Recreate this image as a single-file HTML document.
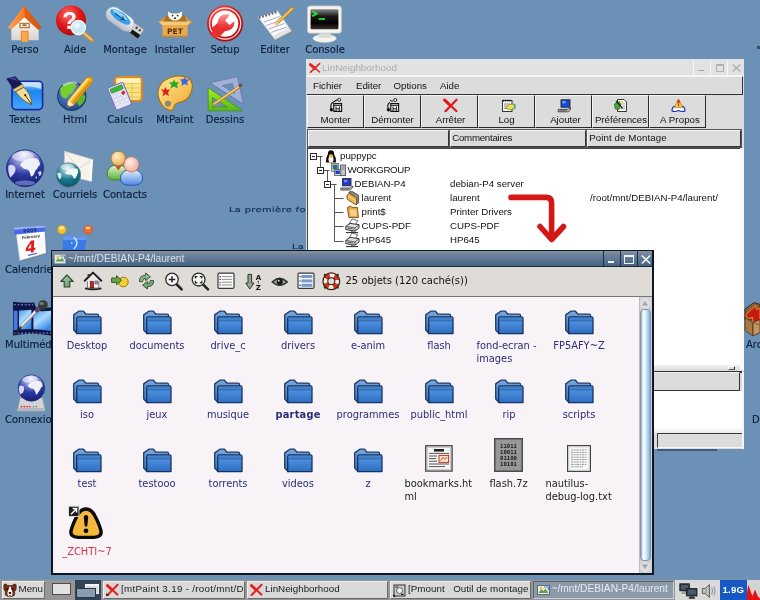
<!DOCTYPE html>
<html><head><meta charset="utf-8"><title>Bureau</title>
<style>
*{box-sizing:border-box;margin:0;padding:0}
html,body{width:760px;height:600px;overflow:hidden}
body{background:#6b91b6;position:relative;font-family:"DejaVu Sans","Liberation Sans",sans-serif;font-size:10px;color:#0e2242}
.abs{position:absolute}
svg{position:absolute;overflow:visible}
.dl{position:absolute;white-space:nowrap;font-size:10px;line-height:12px;color:#0b1e3c;-webkit-text-stroke:.15px #0b1e3c;text-align:center;transform:translateX(-50%);margin-top:.5px;filter:blur(.35px)}
.di{position:absolute;width:40px;height:40px;filter:blur(.35px)}
/* LinNeighborhood */
#lin{position:absolute;left:306px;top:59px;width:438px;height:390px;background:#dcdcdc;font-family:"Liberation Sans",sans-serif;font-size:9.7px;color:#111;overflow:hidden;filter:blur(.3px)}
#lin .tb{position:absolute;left:0;top:0;width:438px;height:17px;background:#e2e2e2;border-bottom:1px solid #f4f4f4}
#lin .tt{position:absolute;left:16px;top:3px;color:#adadad;font-size:9.85px;line-height:12px}
#lin .mb{position:absolute;left:1px;top:17px;width:436px;height:19px;border-right:1.5px solid #333;border-bottom:1.5px solid #333;border-top:1px solid #f6f6f6;background:#dcdcdc}
#lin .mb span{position:absolute;top:3px;line-height:12px}
#lin .tbtn{position:absolute;top:36px;height:33px;border-right:1.5px solid #2a2a2a;border-bottom:1.5px solid #2a2a2a;border-left:1px solid #f4f4f4;border-top:1px solid #f4f4f4;background:#dcdcdc;text-align:center}
#lin .tbtn span{position:absolute;left:0;right:0;top:18px;line-height:12px;white-space:nowrap}
#lin .ch{position:absolute;top:71px;height:16.5px;border-right:1.5px solid #333;border-bottom:1.5px solid #333;border-top:1px solid #f8f8f8;border-left:1px solid #f8f8f8;background:#dcdcdc;padding-left:1.2px;line-height:14.5px;outline:1px solid #555;white-space:nowrap}
#lin .tree{position:absolute;left:1px;top:89px;width:434px;height:217px;background:#fff;border-top:1.5px solid #444;border-left:1.5px solid #444}
#lin .tr{position:absolute;white-space:nowrap;line-height:12px}
/* ROX */
#rox{position:absolute;left:51px;top:250px;width:603px;height:325px;background:#10161e;filter:blur(.3px)}
#rox .tb{position:absolute;left:1px;top:1px;width:600px;height:16px;background:linear-gradient(#8290a4,#6c8099 30%,#4c6a88 85%,#46627f);border-bottom:1px solid #1c2a3c}
#rox .tt{position:absolute;left:16px;top:2px;font-family:"Liberation Sans",sans-serif;font-size:10.2px;line-height:12px;color:#d8e2ee;white-space:nowrap}
#rox .tool{position:absolute;left:1.5px;top:17px;width:599.7px;height:30px;background:#dfdbd6;border-bottom:1px solid #777}
#rox .cont{position:absolute;left:1.5px;top:47px;width:599.7px;height:276px;background:#f7f3f7;overflow:hidden}
.fl{position:absolute;white-space:nowrap;font-size:9.85px;line-height:11px;color:#2c2c78;text-align:center;transform:translateX(-50%)}
.fl.k{color:#222;text-align:left;transform:none}
.fl.l{text-align:left;transform:none}
.fo{position:absolute;width:30px;height:26px}
/* taskbar */
#task{position:absolute;left:0;top:578.5px;width:760px;height:22px;background:#969696;border-top:1.5px solid #7a93ad;font-family:"Liberation Sans",sans-serif;font-size:9.8px;color:#000;filter:blur(.3px);will-change:transform}
#task .b{position:absolute;top:1px;height:17.5px;color:#1a1a1a;border:1px solid #6a6a6a;border-top-color:#f0f0f0;border-left-color:#f0f0f0;background:#d9d9d9;white-space:nowrap;overflow:hidden;line-height:13.5px}
</style></head><body>
<svg width="0" height="0" style="position:absolute">
<defs>
<linearGradient id="ff" x1="0" y1="0" x2="0" y2="1"><stop offset="0" stop-color="#5a9be6"/><stop offset="1" stop-color="#2c6ec2"/></linearGradient>
<linearGradient id="fb" x1="0" y1="0" x2="0" y2="1"><stop offset="0" stop-color="#7aa8de"/><stop offset="1" stop-color="#3f72b4"/></linearGradient>
<symbol id="fo" viewBox="0 0 30 25">
<path d="M0.7,4.4 L5.8,0.7 L10.4,0.7 L13,3.7 L24,3.7 Q25.6,3.7 25.6,5.5 L25.6,8 L5,8 L4,23 L0.7,19.5 Z" fill="url(#fb)" stroke="#1d3a68" stroke-width="1.3" stroke-linejoin="round"/>
<path d="M3.7,7.8 Q3.7,6.4 5.1,6.4 L26.6,6.4 Q28,6.4 28,7.8 L28,23.1 L3.7,23.1 Z" fill="url(#ff)" stroke="#17335f" stroke-width="1.3" stroke-linejoin="round"/>
<path d="M4.4,10.3 L27.3,10.3" stroke="#2a5a9c" stroke-width="0.9"/>
<path d="M4.5,7.2 L27.2,7.2 L27.2,9.7 L4.5,9.7 Z" fill="#3d78c2" opacity=".7"/>
</symbol>
</defs>
</svg>

<svg width="0" height="0" style="position:absolute"><defs>
<linearGradient id="gRoof" x1="0" y1="0" x2="1" y2="0"><stop offset="0" stop-color="#ffa25a"/><stop offset=".5" stop-color="#f87a20"/><stop offset="1" stop-color="#d85a10"/></linearGradient>
<linearGradient id="gWr" x1="0" y1="0" x2="0" y2="1"><stop offset="0" stop-color="#ff9a9a"/><stop offset=".6" stop-color="#f04444"/><stop offset="1" stop-color="#e42424"/></linearGradient>
<linearGradient id="gWall" x1="0" y1="0" x2="0" y2="1"><stop offset="0" stop-color="#ffffff"/><stop offset="1" stop-color="#d8d4d0"/></linearGradient>
<radialGradient id="gRed" cx=".4" cy=".3" r=".8"><stop offset="0" stop-color="#ff6a6a"/><stop offset=".5" stop-color="#e01818"/><stop offset="1" stop-color="#a00808"/></radialGradient>
<radialGradient id="gGlobe" cx=".48" cy=".12" r=".95"><stop offset="0" stop-color="#eeeefc"/><stop offset=".3" stop-color="#8a92d8"/><stop offset=".58" stop-color="#2a38a0"/><stop offset="1" stop-color="#121a6c"/></radialGradient>
<radialGradient id="gTeal" cx=".45" cy=".25" r=".85"><stop offset="0" stop-color="#d8f0f0"/><stop offset=".5" stop-color="#1a7a90"/><stop offset="1" stop-color="#0a4858"/></radialGradient>
<radialGradient id="gEarth" cx=".45" cy=".3" r=".8"><stop offset="0" stop-color="#6a98d8"/><stop offset="1" stop-color="#1a3a80"/></radialGradient>
<linearGradient id="gBlueSq" x1="0" y1="0" x2="0" y2="1"><stop offset="0" stop-color="#b8dcff"/><stop offset=".35" stop-color="#1a86f0"/><stop offset="1" stop-color="#48a8ff"/></linearGradient>
<linearGradient id="gPal" x1="0" y1="0" x2="1" y2="1"><stop offset="0" stop-color="#ffe890"/><stop offset="1" stop-color="#f0a830"/></linearGradient>
<linearGradient id="gGreenT" x1="0" y1="0" x2="0" y2="1"><stop offset="0" stop-color="#a8f020"/><stop offset="1" stop-color="#58b818"/></linearGradient>
<linearGradient id="gScr" x1="0" y1="0" x2="0" y2="1"><stop offset="0" stop-color="#8a8a8a"/><stop offset=".35" stop-color="#1a1a1a"/><stop offset=".7" stop-color="#000"/><stop offset="1" stop-color="#3a3030"/></linearGradient>
<linearGradient id="gUsb" x1="0" y1="0" x2="0" y2="1"><stop offset="0" stop-color="#ffffff"/><stop offset="1" stop-color="#b8bcc8"/></linearGradient>
<linearGradient id="gGreenB" x1="0" y1="0" x2="0" y2="1"><stop offset="0" stop-color="#e8f8d8"/><stop offset="1" stop-color="#58b038"/></linearGradient>
<linearGradient id="gBlueB" x1="0" y1="0" x2="0" y2="1"><stop offset="0" stop-color="#e8f0ff"/><stop offset="1" stop-color="#4a88e0"/></linearGradient>
<radialGradient id="gHead1" cx=".4" cy=".35" r=".7"><stop offset="0" stop-color="#fff0c8"/><stop offset="1" stop-color="#f0a850"/></radialGradient>
<radialGradient id="gHead2" cx=".4" cy=".35" r=".7"><stop offset="0" stop-color="#fff0e8"/><stop offset="1" stop-color="#f0a898"/></radialGradient>
<linearGradient id="gFilm" x1="0" y1="0" x2=".6" y2="1"><stop offset="0" stop-color="#4a90e8"/><stop offset=".5" stop-color="#a8dcff"/><stop offset="1" stop-color="#3a88e4"/></linearGradient>
</defs></svg>

<!-- Perso -->
<svg class="di" style="left:5px;top:3px" viewBox="0 0 40 40">
<path d="M19.5,13.5 L6.3,26 L6.3,37.3 L33.7,37.3 L33.7,26 Z" fill="url(#gWall)"/>
<path d="M19.3,2.6 L2.9,24.6 L6,26.8 L19.5,14.3 L33.2,26.8 L36.6,24.6 Z" fill="url(#gRoof)"/>
<path d="M19.3,2.6 L36.6,24.6 L33.2,26.8 L19.5,14.3 Z" fill="#d0500c" opacity=".55"/>
<rect x="14.3" y="19.8" width="10.6" height="5.4" fill="#b87838"/><rect x="15.6" y="21" width="8" height="3" fill="#f4ead8"/><rect x="17.5" y="21.4" width="4" height="1.5" fill="#8a5a30"/>
<rect x="15.8" y="27.8" width="7.8" height="11" fill="#f08a28"/><rect x="17" y="29" width="5.4" height="9.8" fill="#f8a850"/>
</svg>
<!-- Aide -->
<svg class="di" style="left:55px;top:3px" viewBox="0 0 40 40">
<circle cx="16" cy="17.4" r="15" fill="url(#gRed)"/>
<text x="14.5" y="26" font-family="Liberation Sans,sans-serif" font-weight="bold" font-size="24" fill="#fff" text-anchor="middle">?</text>
<path d="M28.5,30 L37,37.5" stroke="#c89030" stroke-width="4" stroke-linecap="round"/><path d="M29,29.8 L36.8,36.8" stroke="#f4d070" stroke-width="1.6" stroke-linecap="round"/>
<circle cx="23.3" cy="24.6" r="7" fill="#c8e8f4" stroke="#eef4f8" stroke-width="1.6"/><circle cx="21.8" cy="22.6" r="3" fill="#eefaff" opacity=".8"/>
</svg>
<!-- Montage -->
<svg class="di" style="left:105px;top:3px" viewBox="0 0 40 40">
<g transform="translate(5.6,9.4) rotate(35.5)">
<rect x="25" y="-5.4" width="12.4" height="10.8" fill="#d8d8dc" stroke="#8a8a90" stroke-width=".8"/>
<rect x="27.6" y="1.2" width="9.8" height="4.2" fill="#161616"/>
<rect x="29" y="-3.6" width="2.2" height="2.2" fill="#444"/><rect x="33" y="-3.6" width="2.2" height="2.2" fill="#444"/>
<rect x="-4" y="-7.6" width="31" height="15.2" rx="7.6" fill="url(#gUsb)" stroke="#a8acb8" stroke-width=".6"/>
<ellipse cx="10.5" cy="-2" rx="12" ry="4.6" fill="#38a0e8"/><ellipse cx="9" cy="-3.6" rx="9" ry="2" fill="#b8e4ff" opacity=".7"/>
<path d="M4,-1.8 L17,-1.8 M12,-3.8 L15,-1.8 L12,.2" stroke="#0a4a88" stroke-width="1" fill="none"/>
</g></svg>
<!-- Installer -->
<svg class="di" style="left:155px;top:3px" viewBox="0 0 40 40">
<path d="M7.5,21.5 L3,19.5 L11,12.5 L15.5,15.5 Z" fill="#d89840"/><path d="M32.5,21.5 L37.5,19.5 L29.5,12.5 L24.5,15.5 Z" fill="#d89840"/>
<path d="M11,12.5 L29.5,12.5 L32.5,21 L7.5,21 Z" fill="#a87028"/>
<path d="M13,8.4 L16.6,10.4 L23.4,10.4 L27.2,8.4 L26.8,13.4 Q24.6,17.4 20,17.4 Q15.4,17.4 13.4,13.4 Z" fill="#fffdf6"/>
<circle cx="17.6" cy="12.6" r=".9" fill="#222"/><circle cx="22.6" cy="12.6" r=".9" fill="#222"/><ellipse cx="20" cy="15.2" rx="1.2" ry=".9" fill="#333"/>
<path d="M4.2,18.6 L35.8,18.6 L33,22.3 L7,22.3 Z" fill="#f6c878"/>
<rect x="7.4" y="22" width="25.2" height="12" fill="#eca84c"/><rect x="7.4" y="32.5" width="25.2" height="1.6" fill="#c88830"/>
<text x="20" y="31.2" font-family="DejaVu Sans,sans-serif" font-weight="bold" font-size="7.6" fill="#4a3010" text-anchor="middle">PET</text>
</svg>
<!-- Setup -->
<svg class="di" style="left:205px;top:3px" viewBox="0 0 40 40">
<circle cx="20.1" cy="20.6" r="18" fill="url(#gRed)"/>
<circle cx="20.1" cy="20.6" r="15.6" fill="none" stroke="#ffdcdc" stroke-width="1.3"/>
<circle cx="20.1" cy="20.6" r="13.2" fill="#fff"/>
<path d="M7.4,24.4 Q9.4,31.6 15.4,33 L21,27 L13.4,19.6 Z" fill="#e83030"/>
<path d="M10.4,31 L19,21.4" stroke="#e83030" stroke-width="7.4" stroke-linecap="round"/>
<circle cx="21" cy="19.6" r="8.4" fill="url(#gWr)"/>
<path d="M20.2,17.6 L24.6,22.2 L32,15.4 L26.6,9.6 Z" fill="#fff"/>
</svg>
<!-- Editer -->
<svg class="di" style="left:255px;top:3px" viewBox="0 0 40 40">
<path d="M4.5,15.5 L23.5,9.5 L37.4,29.5 L21,38 Z" fill="#8a8a8a" opacity=".5"/>
<path d="M3,14 L22.6,8 L36.4,28 L20,36.5 Z" fill="#fafafa" stroke="#c8c8c8" stroke-width=".6"/>
<path d="M20,36.5 L36.4,28 L34,24.5 L18,33 Z" fill="#d8d8d8" opacity=".7"/>
<path d="M9,19 L25,13.5 M11,22.5 L27,17 M13.5,26 L29.5,20.5 M16,29.5 L32,24" stroke="#a8a0d0" stroke-width=".9"/>
<path d="M4,14.6 L22,9" stroke="#555" stroke-width="2.4" stroke-dasharray="1.6 1.7"/>
<path d="M21.5,20.5 L37.5,5.5" stroke="#c89028" stroke-width="3.4" stroke-linecap="round"/><path d="M21.8,20 L37,5.8" stroke="#f8d068" stroke-width="1.4" stroke-linecap="round"/>
<path d="M19.5,22.5 L21,19 L23.5,21 Z" fill="#f0d8b0"/>
</svg>
<!-- Console -->
<svg class="di" style="left:305px;top:3px" viewBox="0 0 40 40">
<ellipse cx="19.6" cy="35.4" rx="11.8" ry="4.2" fill="#f2f2ee" stroke="#c0c0bc" stroke-width=".6"/>
<path d="M14.5,29 L25,29 L26.5,35 L13,35 Z" fill="#dcdcd8"/>
<rect x="2.4" y="2.9" width="34" height="27.3" rx="2.8" fill="#f4f4f0" stroke="#c4c4c0" stroke-width=".8"/>
<rect x="5.6" y="6.2" width="27.8" height="20" rx="1" fill="url(#gScr)"/>
<path d="M7.3,8.3 L11.6,10.8 L7.3,13.3" stroke="#30e030" stroke-width="1.8" fill="none"/><rect x="13.6" y="15.2" width="6.4" height="1.7" fill="#30e030"/>
</svg>
<!-- Textes -->
<svg class="di" style="left:5px;top:73px" viewBox="0 0 40 40">
<rect x="7" y="8.2" width="30.6" height="28.4" rx="4" fill="url(#gBlueSq)" stroke="#1a2aa0" stroke-width="1.6"/>
<path d="M8.5,18 Q22,10 36,16 L36,12 Q36,9.6 33.6,9.6 L11,9.6 Q8.5,9.6 8.5,12 Z" fill="#d8ecff" opacity=".75"/>
<path d="M1.3,5.4 L10.4,3.2 L17.6,11.4 L8.6,16.4 Z" fill="#181858"/><path d="M3.6,5.6 L9.6,4.2 L13,8 Z" fill="#6a6ac0" opacity=".55"/>
<path d="M8.4,16.2 L17.6,11.2 L19.2,13.6 L10,18.8 Z" fill="#e8c878" stroke="#8a6a28" stroke-width=".5"/>
<path d="M10.6,18.8 L18.8,14.4 Q26,20.4 26.8,31.8 Q17.4,28 10.6,18.8 Z" fill="#f4dc98" stroke="#6a4a18" stroke-width=".7"/>
<path d="M26.6,31.4 L20,22" stroke="#3a2a10" stroke-width=".9"/><circle cx="20.2" cy="22.2" r="1.1" fill="#3a2a10"/>
</svg>
<!-- Html -->
<svg class="di" style="left:55px;top:73px" viewBox="0 0 40 40">
<circle cx="16.8" cy="23.2" r="14.3" fill="url(#gEarth)" stroke="#183058" stroke-width="1"/>
<path d="M5,16 Q9,10 16,9.5 Q20,10 22,13 Q18,16 17,20 Q13,21 12,25 Q8,26 6,22 Z" fill="#78d030"/>
<path d="M22,22 Q28,19 30.5,24 Q29,31 24,33 Q21,29 22,22 Z" fill="#58b828"/>
<path d="M8,12.5 Q14,8 22,10" stroke="#e8f4ff" stroke-width="2.2" fill="none" opacity=".6"/>
<path d="M12,34.5 L13.2,27 L31.5,4.8 Q34,2.5 36.6,4.8 Q39,7.2 37,9.8 L18.8,32 Z" fill="#f4b020" stroke="#a87010" stroke-width=".7"/>
<path d="M14.8,27.6 L33,5.8" stroke="#ffe078" stroke-width="2.2"/><path d="M17.6,30.4 L36,8.4" stroke="#d88c10" stroke-width="1.8"/>
<path d="M12,34.5 L13.2,27 L18.8,32 Z" fill="#f8e8c8"/><path d="M12,34.5 L12.5,31.6 L14.6,33.4 Z" fill="#555"/>
</svg>
<!-- Calculs -->
<svg class="di" style="left:105px;top:73px" viewBox="0 0 40 40">
<rect x="10" y="4" width="26.8" height="24" rx="3.4" fill="#f8e488" stroke="#e08820" stroke-width="2.2"/>
<path d="M11.5,10.5 L35.5,10.5 M11.5,15 L35.5,15 M11.5,19.5 L35.5,19.5 M11.5,24 L35.5,24 M19,5.5 L19,27 M27,5.5 L27,27" stroke="#e8c050" stroke-width=".9"/>
<rect x="11.5" y="5.5" width="24" height="4.6" fill="#fff6c8" opacity=".8"/>
<g transform="translate(2.4,15.2) rotate(-22)">
<rect x="0" y="0" width="16.6" height="24" rx="1.8" fill="#e4e4f6" stroke="#7a70c0" stroke-width="1.1"/>
<rect x="1.8" y="2" width="13" height="4.4" rx="1" fill="#38b838" stroke="#187818" stroke-width=".5"/>
<g fill="#f8f8ff" stroke="#b0b0d8" stroke-width=".4"><rect x="2" y="9" width="3" height="2.6"/><rect x="6.8" y="9" width="3" height="2.6"/><rect x="2" y="13" width="3" height="2.6"/><rect x="6.8" y="13" width="3" height="2.6"/><rect x="11.6" y="13" width="3" height="2.6"/><rect x="2" y="17" width="3" height="2.6"/><rect x="6.8" y="17" width="3" height="2.6"/><rect x="11.6" y="17" width="3" height="2.6"/></g>
<circle cx="13" cy="10.2" r="1.9" fill="#e02828"/>
</g></svg>
<!-- MtPaint -->
<svg class="di" style="left:155px;top:73px" viewBox="0 0 40 40">
<path d="M3,22 Q2,10 14,5 Q26,0.5 34,5.5 Q39.5,10 36,20 Q33,28 24,29.5 Q19.5,30.5 19,34 Q18.5,38 14.5,37.4 Q5,34 3,22 Z" fill="url(#gPal)" stroke="#a07420" stroke-width="1.2"/>
<circle cx="13" cy="30.6" r="2.6" fill="#6b91b6" stroke="#a07420" stroke-width=".9"/>
<path d="M6,16 L9,17 L10.5,14 L12,17 L15,16.5 L13,19.5 L14,23 L10.5,21 L7.5,23.5 L8.5,19.5 Z" fill="#e02018"/>
<path d="M14,9 L17.5,9.5 L19,6.5 L20.5,9.5 L24,9 L22,12 L23,15.5 L19,13.5 L15.5,15.5 L16.5,12 Z" fill="#28a828"/>
<path d="M25,6 L28,6.5 L29.5,4 L31,6.5 L34,6.5 L32,9.5 L33,12.5 L29.5,11 L26.5,13 L27,9.5 Z" fill="#3868e0"/>
</svg>
<!-- Dessins -->
<svg class="di" style="left:205px;top:73px" viewBox="0 0 40 40">
<path d="M3.2,15 L3.2,37.8 L37.8,37.8 Z M7.6,24.5 L22.6,34 L7.6,34 Z" fill="url(#gGreenT)" fill-rule="evenodd" stroke="#3a9010" stroke-width=".7"/>
<path d="M4.6,9.8 L32.4,3.6 L38.4,31 Z M17.5,12.6 L27.5,10.6 L29.6,20.6 Z" fill="#a8b4dc" fill-rule="evenodd" stroke="#5a6a98" stroke-width=".7" opacity=".92"/>
<path d="M8.6,31.6 L35.6,13" stroke="#b88830" stroke-width="3" stroke-linecap="round"/><path d="M8.8,31 L35.4,12.8" stroke="#f8d878" stroke-width="1.3" stroke-linecap="round"/>
<path d="M34,13.4 L36.8,11.6" stroke="#555" stroke-width="3"/>
</svg>
<!-- Internet -->
<svg class="di" style="left:5px;top:148px" viewBox="0 0 40 40">
<circle cx="20" cy="20.3" r="18.4" fill="url(#gGlobe)" stroke="#283078" stroke-width="1"/>
<path d="M15,17 Q18,12 22,11.5 Q27,9 32,10.5 Q35,13 35,17 Q33,18 32,21 Q30,22 29,26 Q27,30 25.5,27.5 Q25,23 22.5,21.5 Q19,22 15,17 Z" fill="#f0f0fa"/>
<path d="M3.5,17.5 Q7,15.5 10,18.5 Q11.5,22 9,25.5 Q7,28 5.5,29.5 Q2.5,24 3.5,17.5 Z" fill="#d8d8f4"/>
<path d="M33,24 L36,23 L36.5,26 L34.5,28.5 Z M30,29 L32,28.5 L32,31 Z" fill="#d0d0f0"/>
<ellipse cx="18" cy="8.5" rx="11" ry="5" fill="#fff" opacity=".45"/>
<ellipse cx="20" cy="35" rx="10" ry="2.6" fill="#a8b0f0" opacity=".5"/>
</svg>
<!-- Courriels -->
<svg class="di" style="left:55px;top:148px" viewBox="0 0 40 40">
<path d="M9.6,3.2 L37.8,11.6 L36.4,33.4 L9.4,27 Z" fill="#f6f2ec" stroke="#d0ccc4" stroke-width=".6"/>
<path d="M9.6,3.2 L24,20.5 L37.8,11.6" fill="none" stroke="#d8d2c8" stroke-width=".9"/><path d="M36.4,33.4 L37.8,11.6 L35.5,12.5 L34.6,32.6 Z" fill="#fff"/>
<circle cx="13.4" cy="27" r="12.3" fill="url(#gTeal)" stroke="#708890" stroke-width=".8"/>
<path d="M10,25.5 Q12,21.5 15,21 Q19,19.5 22.5,20.8 Q24,24 22,27.5 Q20,32 18.5,30 Q18,27.5 16,26.5 Q13,27 10,25.5 Z" fill="#f0f8f8"/>
<path d="M2.2,25 Q4.5,24 6.5,26 Q7,29 5,31.5 Q3,30 2.2,25 Z" fill="#d8ecec"/>
<ellipse cx="12.5" cy="19" rx="7" ry="3.2" fill="#fff" opacity=".45"/>
</svg>
<!-- Contacts -->
<svg class="di" style="left:105px;top:148px" viewBox="0 0 40 40">
<path d="M2.2,27 Q2.2,17 12.5,17 Q23,17 23,27 Q23,32 12.5,32 Q2.2,32 2.2,27 Z" fill="url(#gGreenB)" stroke="#3a8a28" stroke-width="1"/>
<path d="M10,18 L13.3,22.5 L16.5,18 Z" fill="#c85a18"/>
<circle cx="13.3" cy="10.4" r="7.2" fill="url(#gHead1)" stroke="#b07830" stroke-width=".8"/>
<path d="M15.4,31 Q15.4,21.5 26.4,21.5 Q37.6,21.5 37.6,31 Q37.6,37.4 26.4,37.4 Q15.4,37.4 15.4,31 Z" fill="url(#gBlueB)" stroke="#2858b0" stroke-width="1"/>
<circle cx="26.4" cy="16.4" r="7.6" fill="url(#gHead2)" stroke="#b87868" stroke-width=".8"/>
</svg>
<!-- Calendrier -->
<svg class="di" style="left:13px;top:223px" viewBox="0 0 40 40">
<path d="M5,12 L33,9.5 L35,31 L8.6,39 Z" fill="#6a7a90" opacity=".5"/>
<path d="M3.2,10.5 L31.6,7.5 L33,30 L6.8,37.4 Z" fill="#fbfbfb" stroke="#c8c8c8" stroke-width=".5"/>
<path d="M0.8,4.6 L31.6,2.4 L32.4,8.6 L1.3,11.8 Z" fill="#4a6ee0"/><path d="M0.8,4.6 L31.6,2.4 L31.9,4.4 L1,6.8 Z" fill="#9ab0f8"/>
<text x="17" y="9" font-family="DejaVu Sans,sans-serif" font-weight="bold" font-size="5" fill="#1a2a78" text-anchor="middle" transform="rotate(-5 17 9)">2003</text>
<text x="18" y="15" font-family="DejaVu Sans,sans-serif" font-weight="bold" font-size="3.6" fill="#333" text-anchor="middle" transform="rotate(-6 18 15)">February</text>
<text x="18.6" y="29.6" font-family="DejaVu Sans,sans-serif" font-weight="bold" font-style="italic" font-size="16" fill="#e01818" text-anchor="middle" transform="rotate(-8 18.6 29.6)">4</text>
<path d="M15,32.4 L24,30.2" stroke="#3a68c8" stroke-width="1.1"/>
</svg>
<!-- Bureau (row4 #2) -->
<svg class="di" style="left:55px;top:223px" viewBox="0 0 40 40">
<circle cx="6.8" cy="6.6" r="4.3" fill="#f8c028" stroke="#d89818" stroke-width=".6"/><ellipse cx="6.6" cy="5" rx="2.6" ry="1.4" fill="#fff0a0"/>
<circle cx="33.2" cy="6.6" r="4.3" fill="#f06a28" stroke="#c84818" stroke-width=".6"/><ellipse cx="33" cy="5" rx="2.6" ry="1.4" fill="#ffc090"/>
<path d="M8.4,13.4 L32,13.4 L29.6,27 L7.4,27 Z" fill="#3a7ae8"/>
<path d="M8.4,13.4 L32,13.4 L31.4,17 L8.2,17 Z" fill="#78a8f8" opacity=".7"/>
<path d="M19,14.5 Q25,19 19,26 M16,20 L17.5,20" stroke="#c8e0ff" stroke-width="1.6" fill="none"/>
</svg>
<!-- Multimedia -->
<svg class="di" style="left:11px;top:298px" viewBox="0 0 40 40">
<path d="M2,3.8 Q12,5.4 23,4.4 L25,9.4 Q32,10.6 40,9.6 L40,37.6 Q20,34 2,37.6 Z" fill="#0e1648"/>
<path d="M2.6,12.4 Q5,12.8 6.6,12.8 L6.6,31.4 Q4.4,31.8 2.6,32.4 Z" fill="#4a78e0"/>
<path d="M8,12.6 Q14,12.6 20.4,11.8 L20.4,31 Q13,31 8,31.6 Z" fill="url(#gFilm)"/><path d="M22.4,12.6 Q30,13.6 40,12.8 L40,33 Q30,31.4 22.4,31.2 Z" fill="url(#gFilm)"/>
<path d="M3,6.6 L22,6.8 M3,35.4 L40,35" stroke="#6878b8" stroke-width="1.4" stroke-dasharray="1.8 1.8"/>
<path d="M10.8,28 L5,35.6" stroke="#20242c" stroke-width="2.2" stroke-linecap="round"/>
<path d="M10.8,28 L27,11.4" stroke="#8a8a98" stroke-width="3.6" stroke-linecap="round"/><path d="M10.8,27.4 L26.8,11" stroke="#ececf4" stroke-width="1.9" stroke-linecap="round"/>
<path d="M26,12.4 L29,9.4" stroke="#5a4a68" stroke-width="4.4" stroke-linecap="round"/>
<circle cx="32" cy="7" r="4.8" fill="#343a36"/><ellipse cx="30.6" cy="5.4" rx="2.4" ry="1.5" fill="#8a948a" opacity=".75"/>
</svg>
<!-- Connexion -->
<svg class="di" style="left:11px;top:373px" viewBox="0 0 40 40">
<path d="M9,25 L31.5,25 L34,37.6 L6.6,37.6 Z" fill="#d4d4d8" stroke="#a0a0a8" stroke-width=".6"/><rect x="6.6" y="35" width="27.4" height="3.2" fill="#b8b8c0"/>
<circle cx="10.5" cy="33.6" r=".9" fill="#e02020"/><circle cx="13.3" cy="33.6" r=".9" fill="#e02020"/><circle cx="16.1" cy="33.6" r=".9" fill="#e02020"/><circle cx="18.9" cy="33.6" r=".9" fill="#e02020"/><circle cx="22.5" cy="33.6" r=".9" fill="#58a858"/><circle cx="25.3" cy="33.6" r=".9" fill="#888"/>
<circle cx="20.4" cy="15" r="13.2" fill="url(#gGlobe)" stroke="#283078" stroke-width=".8"/>
<path d="M16.5,12.5 Q19,9 22,8.6 Q26,7 30,8.4 Q32,11 31.6,13.6 Q29.6,14.6 29,17 Q27,19 26,21.5 Q24.6,22 24.4,19 Q23.4,16.4 21.6,15.6 Q19,16 16.5,12.5 Z" fill="#f0f0fa"/>
<path d="M8.2,13 Q11,11.6 13,14 Q13.6,17 12,19.6 Q10,21 9,21.6 Q7,17.6 8.2,13 Z" fill="#d8d8f4"/>
<ellipse cx="19" cy="6.6" rx="8" ry="3.4" fill="#fff" opacity=".45"/>
</svg>
<!-- Archives (right edge) -->
<svg class="di" style="left:744px;top:298px" viewBox="0 0 40 40">
<path d="M1,11 L10,4.6 L16,6.4 L16,22 L1,22 Z" fill="#8a5c38" stroke="#3a2614" stroke-width=".9"/>
<path d="M1.6,17 L11.4,7.6 L12.2,11.4 L16,10.4 L16,25 L9,25 L8.6,19.4 L4.4,20.6 Z" fill="#c41c14" stroke="#e88a28" stroke-width="1"/>
<path d="M1,19.6 L9,24.6 L9,38 L1,32.4 Z" fill="#a87848" stroke="#4a3018" stroke-width=".8"/>
<path d="M9,24.6 L16,21.4 L16,34.6 L9,38 Z" fill="#c49464" stroke="#4a3018" stroke-width=".8"/>
<path d="M9,24.6 L16,27" stroke="#8a6038" stroke-width="1"/>
</svg>

<div class="dl" style="left:25px;top:43.5px">Perso</div>
<div class="dl" style="left:75px;top:43.5px">Aide</div>
<div class="dl" style="left:125px;top:43.5px">Montage</div>
<div class="dl" style="left:175px;top:43.5px">Installer</div>
<div class="dl" style="left:225px;top:43.5px">Setup</div>
<div class="dl" style="left:275px;top:43.5px">Editer</div>
<div class="dl" style="left:325px;top:43.5px">Console</div>
<div class="dl" style="left:25px;top:113.5px">Textes</div>
<div class="dl" style="left:75px;top:113.5px">Html</div>
<div class="dl" style="left:125px;top:113.5px">Calculs</div>
<div class="dl" style="left:175px;top:113.5px">MtPaint</div>
<div class="dl" style="left:225px;top:113.5px">Dessins</div>
<div class="dl" style="left:25px;top:188.5px">Internet</div>
<div class="dl" style="left:75px;top:188.5px">Courriels</div>
<div class="dl" style="left:125px;top:188.5px">Contacts</div>
<div class="dl" style="left:5px;top:263.5px;transform:none">Calendrier</div>
<div class="dl" style="left:5px;top:338px;transform:none">Multimédia</div>
<div class="dl" style="left:5px;top:413px;transform:none">Connexion</div>
<div class="dl" style="left:746px;top:338px;transform:none">Archives</div>
<div class="dl" style="left:752px;top:413px;transform:none">Disques</div>
<div class="abs" style="left:229px;top:205.5px;font-size:7px;line-height:8px;letter-spacing:.25px;color:#14305a;-webkit-text-stroke:.2px #14305a;white-space:nowrap;transform:scaleX(1.41);transform-origin:0 0;filter:blur(.4px)">La première fois</div>
<div class="abs" style="left:291.5px;top:242.5px;font-size:7px;line-height:8px;letter-spacing:.25px;color:#14305a;-webkit-text-stroke:.2px #14305a;white-space:nowrap;transform:scaleX(1.41);transform-origin:0 0;filter:blur(.4px)">La</div>
<div class="abs" style="left:657px;top:449px;width:60px;height:2px;background:#1a3050;opacity:.55;filter:blur(.6px)"></div>
<div class="abs" style="left:757px;top:46px;width:3px;height:3px;background:#1a3050;opacity:.7;filter:blur(.5px)"></div>

<!-- LinNeighborhood window -->
<div id="lin">
 <div class="tb"><div class="tt">LinNeighborhood</div>
  <svg style="left:3px;top:4px" width="12" height="10" viewBox="0 0 12 10"><path d="M1.2,1.4 L10.6,9 M10.6,.6 L1.6,9.2" stroke="#e02424" stroke-width="1.6" stroke-linecap="round"/><path d="M1.4,1.6 L6,5.4" stroke="#e02424" stroke-width="3" stroke-linecap="round"/></svg>
  <div class="abs" style="left:387px;top:1px;width:1px;height:15px;background:#f6f6f6"></div>
  <div class="abs" style="left:404px;top:1px;width:1px;height:15px;background:#f6f6f6"></div>
  <div class="abs" style="left:421px;top:1px;width:1px;height:15px;background:#f6f6f6"></div>
  <div class="abs" style="left:392px;top:10.5px;width:6px;height:1.6px;background:#a8a8a8"></div>
  <div class="abs" style="left:409.5px;top:5px;width:8.5px;height:8px;border:1.2px solid #b0b0b0;border-top-width:2px"></div>
  <svg style="left:426px;top:5px" width="9" height="8" viewBox="0 0 9 8"><path d="M.6,.4 L8.4,7.6 M8.4,.4 L.6,7.6" stroke="#b0b0b0" stroke-width="1.3"/></svg>
 </div>
 <div class="mb"><span style="left:6px">Fichier</span><span style="left:49px">Editer</span><span style="left:86.5px">Options</span><span style="left:133px">Aide</span></div>
 <div class="tbtn" style="left:1px;width:57px"><span>Monter</span>
  <svg style="left:20px;top:2px" width="15" height="15" viewBox="0 0 15 15"><path d="M5.8,5.6 L13.6,5.6 L13.6,13.4 L5.8,13.4 Z" fill="#f4f4f4" stroke="#111" stroke-width="1.1"/><path d="M8,8.4 L8,13.4 M11.4,8.4 L11.4,13.4 M8,10.8 L11.4,10.8 M5.8,7.4 L13.6,7.4" stroke="#111" stroke-width=".9" fill="none"/><path d="M3.5,11.5 Q1.5,6 5.5,4 Q8,2.5 10.5,1.6" stroke="#111" stroke-width="1.1" fill="none"/><circle cx="3.4" cy="11.8" r="1.7" fill="#111"/><circle cx="11.2" cy="1.8" r="1.5" fill="#fff" stroke="#111" stroke-width=".9"/></svg></div>
 <div class="tbtn" style="left:58px;width:57px"><span>Démonter</span>
  <svg style="left:20px;top:2px" width="15" height="15" viewBox="0 0 15 15"><path d="M5.8,5.6 L13.6,5.6 L13.6,13.4 L5.8,13.4 Z" fill="#f4f4f4" stroke="#111" stroke-width="1.1"/><path d="M8,8.4 L8,13.4 M11.4,8.4 L11.4,13.4 M8,10.8 L11.4,10.8 M5.8,7.4 L13.6,7.4" stroke="#111" stroke-width=".9" fill="none"/><path d="M3.5,11.5 Q1.5,6 5,4.6" stroke="#111" stroke-width="1.1" fill="none"/><circle cx="3.4" cy="11.8" r="1.7" fill="#111"/><circle cx="10.2" cy="2" r="1.5" fill="#fff" stroke="#111" stroke-width=".9"/><path d="M5,2.5 L8,3.4" stroke="#111" stroke-width="1"/></svg></div>
 <div class="tbtn" style="left:115px;width:57px"><span style="left:2px">Arrêter</span>
  <svg style="left:21px;top:3px" width="15" height="13" viewBox="0 0 15 13"><path d="M1.6,1 L13.4,12 M13.6,.8 L2.4,12.2" stroke="#e01818" stroke-width="2.2" stroke-linecap="round"/><path d="M1.6,1 L6,5.2" stroke="#e01818" stroke-width="3" stroke-linecap="round"/></svg></div>
 <div class="tbtn" style="left:172px;width:57px"><span>Log</span>
  <svg style="left:22px;top:2px" width="15" height="15" viewBox="0 0 15 15"><rect x="1.5" y="2.5" width="9.5" height="11" fill="#fafafa" stroke="#222" stroke-width=".9"/><path d="M2,2.6 L10.6,2.6" stroke="#111" stroke-width="1.8" stroke-dasharray="1.2 .9"/><path d="M3,6 L9,6 M3,8.2 L7,8.2 M3,10.4 L8,10.4" stroke="#666" stroke-width=".8"/><path d="M5,9.6 L8,6.4 L12.5,6 L13.8,9 L11,11.6 L7,11.4 Z" fill="#e8e050" stroke="#6a7a10" stroke-width=".6"/><path d="M12.6,6 L14.2,7 L14,10.6 L12.2,11" stroke="#28a8a0" stroke-width="1.1" fill="none"/></svg></div>
 <div class="tbtn" style="left:229px;width:57px"><span style="left:4px">Ajouter</span>
  <svg style="left:21px;top:3px" width="15" height="14" viewBox="0 0 15 14"><rect x="4" y=".8" width="9" height="7.4" fill="#1848d8" stroke="#222" stroke-width=".9"/><rect x="5.4" y="2" width="3" height="2.4" fill="#68a8ff"/><path d="M1.2,10.4 L11,10.4 L13.4,8.6 L13.4,11 L11.2,12.8 L1.2,12.8 Z" fill="#d0d0d0" stroke="#222" stroke-width=".8"/><path d="M2.5,11.6 L9.5,11.6" stroke="#555" stroke-width=".8"/></svg></div>
 <div class="tbtn" style="left:286px;width:57px"><span style="left:1px">Préférences</span>
  <svg style="left:20px;top:2px" width="15" height="15" viewBox="0 0 15 15"><path d="M4.5,1.5 L11,1.5 L13.5,4 L13.5,13.5 L4.5,13.5 Z" fill="#fafafa" stroke="#222" stroke-width=".9"/><path d="M6,6 L12,6 M6,8.2 L12,8.2 M6,10.4 L12,10.4" stroke="#888" stroke-width=".7"/><path d="M1.4,6 L6.4,3.4 L7.6,6.4 L6,11.4 L2.2,11 Z" fill="#48a838" stroke="#1a5a10" stroke-width=".6"/><path d="M3,3 L9.6,10.4" stroke="#222" stroke-width="1.3"/><circle cx="9" cy="4" r="1.2" fill="#e8d040"/></svg></div>
 <div class="tbtn" style="left:343px;width:57px"><span style="left:5px;letter-spacing:.1px">A Propos</span>
  <svg style="left:21px;top:2px" width="15" height="15" viewBox="0 0 15 15"><path d="M1,13 Q1,8.6 4.4,8 L10.6,8 Q14,8.6 14,13 Q11,14.2 7.5,12.6 Q4,14.2 1,13 Z" fill="#f8f8ff" stroke="#1828b8" stroke-width="1.1"/><path d="M7.5,.8 L11.6,9.4 L3.4,9.4 Z" fill="#f8d838" stroke="#a87810" stroke-width=".7"/><circle cx="7.5" cy="3.4" r="1.5" fill="#e83018"/><path d="M7.5,5.2 L7.5,8.4" stroke="#e83018" stroke-width="1.4"/></svg></div>
 <div class="ch" style="left:2px;width:141px"></div>
 <div class="ch" style="left:144px;width:136px;letter-spacing:-.25px">Commentaires</div>
 <div class="ch" style="left:281px;width:154px;letter-spacing:.1px">Point de Montage</div>
 <div class="tree">
  <svg style="left:-1.5px;top:-1.5px" width="60" height="100" viewBox="0 0 60 100">
   <g fill="none" stroke="#555" stroke-width="1">
    <path d="M9.5,8.5 L15.5,8.5 M13.5,8.5 L13.5,19.5"/>
    <path d="M16.5,22.5 L22.5,22.5 M20.5,22.5 L20.5,33.5"/>
    <path d="M23.5,36.5 L29.5,36.5 M27.5,36.5 L27.5,93.5 L36.5,93.5 M27.5,50.5 L36.5,50.5 M27.5,64.5 L36.5,64.5 M27.5,78.5 L36.5,78.5"/>
   </g>
   <g fill="#fff" stroke="#2a2a2a" stroke-width="1"><rect x="3.5" y="5.5" width="6" height="6"/><rect x="10.5" y="19.5" width="6" height="6"/><rect x="17.5" y="33.5" width="6" height="6"/></g>
   <path d="M5,8.5 L8,8.5 M12,22.5 L15,22.5 M19,36.5 L22,36.5" stroke="#2a2a2a" stroke-width="1"/>
  </svg>
  <!-- tux -->
  <svg style="left:17px;top:.5px" width="12" height="14" viewBox="0 0 12 14"><path d="M6,.3 Q9.2,.3 9.2,4.4 Q11.4,7.4 11,12.4 L1,12.4 Q.6,7.4 2.8,4.4 Q2.8,.3 6,.3 Z" fill="#0c0c0c"/><ellipse cx="6" cy="9.2" rx="2.5" ry="3.2" fill="#fff"/><ellipse cx="6" cy="6" rx="2.2" ry="1.7" fill="#f4c428"/><path d="M3.2,13.2 L5.2,13.2 L5,12 L3.4,12 Z M8.8,13.2 L6.8,13.2 L7,12 L8.6,12 Z" fill="#e8a818"/></svg>
  <!-- workgroup -->
  <svg style="left:22.5px;top:14px" width="16" height="14" viewBox="0 0 16 14"><rect x=".6" y=".6" width="7" height="7.6" fill="#d8d8d8" stroke="#555" stroke-width=".7"/><rect x="1.6" y="1.6" width="5" height="4.4" fill="#2a7088"/><rect x="9.6" y="2" width="5" height="10.6" fill="#c8c8c8" stroke="#444" stroke-width=".8"/><path d="M10.6,4 L13.6,4 M10.6,6 L13.6,6" stroke="#666" stroke-width=".7"/><rect x="3.4" y="6.6" width="6.4" height="5.8" fill="#d8d8e8" stroke="#444" stroke-width=".7"/><rect x="4.4" y="7.6" width="4.4" height="3.4" fill="#2038c8"/></svg>
  <!-- computer -->
  <svg style="left:31.5px;top:28.5px" width="14" height="13" viewBox="0 0 14 13"><rect x="2.6" y=".6" width="8.4" height="7.2" fill="#2038d0" stroke="#222" stroke-width=".9"/><rect x="4" y="1.8" width="3.4" height="2.4" fill="#6888f0"/><path d="M.8,10 L10,10 L12.8,8 L12.8,9.6 L10.2,12 L.8,12 Z" fill="#c8c8c8" stroke="#333" stroke-width=".8"/><path d="M2,11 L9,11" stroke="#555" stroke-width=".7"/></svg>
  <!-- folders -->
  <svg style="left:37.5px;top:42px" width="14" height="14" viewBox="0 0 14 14"><path d="M3,1 L6.4,.6 L12.6,4.4 L12.6,11.6 L10.6,13.4 L4.4,9.4 Z" fill="#8a8a84" stroke="#333" stroke-width=".8" stroke-linejoin="round"/><path d="M.8,4.4 L3.4,2.4 L10.4,6.6 L10.6,13.4 L8.4,13 L1.4,8.4 Z" fill="#f0b048" stroke="#6a4010" stroke-width=".8" stroke-linejoin="round"/><path d="M2,5 L9.4,9.4 L9.4,12" stroke="#f8dc98" stroke-width="1" fill="none"/></svg>
  <svg style="left:38px;top:55.5px" width="14" height="14" viewBox="0 0 14 14"><path d="M1.4,2.6 L4.6,1 L6,2.4 L11.4,2.4 L12.4,12.6 L3,12.6 Z" fill="#eca444" stroke="#7a4a10" stroke-width=".9" stroke-linejoin="round"/><path d="M3.6,4.4 L10.4,4.4 L11,11 L4.4,11 Z" fill="#f8d088"/></svg>
  <!-- printers -->
  <svg style="left:37px;top:69px" width="15" height="15" viewBox="0 0 15 15"><path d="M4,6 L7,1 L12.6,2.6 L10.4,7 Z" fill="#fff" stroke="#333" stroke-width=".7"/><path d="M.8,8.4 L5,5.4 L14,6.6 L14,10 L10,13.2 L.8,11.6 Z" fill="#e0e0e0" stroke="#222" stroke-width=".9" stroke-linejoin="round"/><path d="M.8,8.4 L10,10 L14,6.6 M10,10 L10,13.2" stroke="#222" stroke-width=".7" fill="none"/><path d="M2.4,10.2 L8.4,11.2" stroke="#555" stroke-width="1"/><path d="M1,14.6 L13,14.6 M7,13 L7,14.6" stroke="#222" stroke-width="1"/></svg>
  <svg style="left:37px;top:83px" width="15" height="15" viewBox="0 0 15 15"><path d="M4,6 L7,1 L12.6,2.6 L10.4,7 Z" fill="#fff" stroke="#333" stroke-width=".7"/><path d="M.8,8.4 L5,5.4 L14,6.6 L14,10 L10,13.2 L.8,11.6 Z" fill="#e0e0e0" stroke="#222" stroke-width=".9" stroke-linejoin="round"/><path d="M.8,8.4 L10,10 L14,6.6 M10,10 L10,13.2" stroke="#222" stroke-width=".7" fill="none"/><path d="M2.4,10.2 L8.4,11.2" stroke="#555" stroke-width="1"/><path d="M1,14.6 L13,14.6 M7,13 L7,14.6" stroke="#222" stroke-width="1"/></svg>

  <div class="tr" style="left:32px;top:0.5px">puppypc</div>
  <div class="tr" style="left:39.5px;top:14.5px;letter-spacing:-.35px">WORKGROUP</div>
  <div class="tr" style="left:46.5px;top:28.5px">DEBIAN-P4</div>
  <div class="tr" style="left:53.5px;top:42.5px">laurent</div>
  <div class="tr" style="left:53.5px;top:56.5px">print$</div>
  <div class="tr" style="left:53.5px;top:70.5px">CUPS-PDF</div>
  <div class="tr" style="left:53.5px;top:84.5px">HP645</div>
  <div class="tr" style="left:142px;top:28.5px">debian-P4 server</div>
  <div class="tr" style="left:142px;top:42.5px">laurent</div>
  <div class="tr" style="left:142px;top:56.5px">Printer Drivers</div>
  <div class="tr" style="left:142px;top:70.5px">CUPS-PDF</div>
  <div class="tr" style="left:142px;top:84.5px">HP645</div>
  <div class="tr" style="left:282px;top:42.5px;letter-spacing:.03px">/root/mnt/DEBIAN-P4/laurent/</div>
  <svg style="left:200px;top:44px" width="60" height="50" viewBox="0 0 60 50"><path d="M3,4.4 L38,4.4 Q43.6,4.4 43.6,10 L43.6,45" stroke="#d41818" stroke-width="5.6" fill="none" stroke-linecap="round"/><path d="M32,33.5 L43.6,46.5 L55.5,33.5" stroke="#d41818" stroke-width="5.6" fill="none" stroke-linecap="round" stroke-linejoin="round"/></svg>
 </div>
 <!-- lower panes -->
 <div class="abs" style="left:1px;top:306px;width:436px;height:6px;background:linear-gradient(#f2f2f2,#d8d8d8)"></div>
 <div class="abs" style="left:422px;top:306.5px;width:7px;height:4.5px;background:#dcdcdc;border-right:1px solid #333;border-bottom:1px solid #555;border-top:1px solid #fff;border-left:1px solid #fff"></div>
 <div class="abs" style="left:1px;top:311.5px;width:435px;height:2px;background:#333"></div>
 <div class="abs" style="left:1px;top:313px;width:433px;height:18.5px;background:#dcdcdc;border-right:1.5px solid #333;border-bottom:1.5px solid #333;border-top:1px solid #f0f0f0"></div>
 <div class="abs" style="left:1px;top:331.5px;width:437px;height:42px;background:linear-gradient(#fff 85%,#ececec)"></div>
 <div class="abs" style="left:434px;top:89px;width:4px;height:222px;background:#fafafa"></div>
 <div class="abs" style="left:351px;top:374px;width:86px;height:15px;background:#dcdcdc;border-top:1.5px solid #3a3a3a;border-left:1.5px solid #3a3a3a;border-bottom:1px solid #f8f8f8"></div>
 <div class="abs" style="left:436px;top:313px;width:2px;height:77px;background:#f4f4f4"></div>
</div>

<!-- ROX-Filer window -->
<div id="rox">
 <div class="tb"><div class="tt">~/mnt/DEBIAN-P4/laurent</div>
  <svg style="left:2px;top:3px" width="12" height="10" viewBox="0 0 12 10"><rect x=".5" y=".5" width="11" height="9" fill="#e8ece0" stroke="#8a9aa8" stroke-width=".7"/><path d="M1.5,7.5 L4,4 L6,6 L8,3.5 L10.5,7.5 Z" fill="#6a9a58"/><circle cx="4" cy="3" r="1.3" fill="#e8c040"/><path d="M6,2 L10.5,2 L10.5,5" stroke="#5888c8" stroke-width="1.2" fill="none"/></svg>
  <div class="abs" style="left:550.5px;top:0;width:1.2px;height:16px;background:#1c2c40"></div>
  <div class="abs" style="left:568px;top:0;width:1.2px;height:16px;background:#1c2c40"></div>
  <div class="abs" style="left:585px;top:0;width:1.2px;height:16px;background:#1c2c40"></div>
  <div class="abs" style="left:555.5px;top:9.8px;width:6.2px;height:2.4px;background:#f0f4f8"></div>
  <div class="abs" style="left:572px;top:3.5px;width:9.6px;height:9px;border:1.3px solid #f0f4f8;border-top-width:2.4px"></div>
  <svg style="left:589px;top:3.5px" width="10" height="9" viewBox="0 0 10 9"><path d="M.8,.5 L9.2,8.5 M9.2,.5 L.8,8.5" stroke="#f4f6fa" stroke-width="1.6"/></svg>
 </div>
<div class="tool">
<svg width="0" height="0"><defs>
<linearGradient id="tg" x1="0" y1="0" x2="1" y2="1"><stop offset="0" stop-color="#b8d8b8"/><stop offset="1" stop-color="#5c8c5c"/></linearGradient>
<linearGradient id="lb" x1="0" y1="0" x2="1" y2="0"><stop offset="0" stop-color="#8ab8f0"/><stop offset=".45" stop-color="#e4f2ff"/><stop offset="1" stop-color="#8ab4ec"/></linearGradient>
</defs></svg>
<svg style="left:5px;top:5px" width="18" height="18" viewBox="0 0 18 18"><path d="M9,3 L2.8,9.4 L6.2,9.4 L6.2,15 L11.8,15 L11.8,9.4 L15.2,9.4 Z" fill="url(#tg)" stroke="#2c442c" stroke-width="1.1" stroke-linejoin="round"/></svg>
<svg style="left:30px;top:4px" width="20" height="20" viewBox="0 0 20 20"><path d="M2,17.4 Q10,19.4 18.4,17.4" stroke="#222" stroke-width="1.6" fill="none"/><rect x="4.4" y="8.6" width="11.4" height="8.4" fill="#f4f4f0" stroke="#555" stroke-width=".7"/><path d="M1.2,10.2 L10,1.6 L18.8,10.2" stroke="#1a1a1a" stroke-width="1.9" fill="#e8e8e4" stroke-linejoin="round"/><rect x="4.6" y="3" width="2" height="3.6" fill="#333"/><rect x="7.2" y="10.6" width="3.4" height="6.4" fill="#c02828" stroke="#500" stroke-width=".6"/><rect x="12" y="10" width="2.8" height="3" fill="#88a0b8" stroke="#444" stroke-width=".5"/></svg>
<svg style="left:57px;top:5px" width="20" height="18" viewBox="0 0 20 18"><circle cx="13.4" cy="10" r="4.8" fill="#f4d030" stroke="#8a7010" stroke-width=".9"/><path d="M1.6,6 L6.6,6 L6.6,3.6 L11.6,8.2 L6.6,12.8 L6.6,10.4 L1.6,10.4 Z" fill="#68a848" stroke="#2c4c1c" stroke-width=".9" stroke-linejoin="round"/></svg>
<svg style="left:84px;top:5px" width="19" height="18" viewBox="0 0 19 18"><path d="M2.4,9.6 Q2,3.6 8.6,3.2 L8.6,1 L13.4,4.8 L8.6,8.6 L8.6,6.2 Q5.4,6.4 5.6,9.6 Z" fill="#88b888" stroke="#2c4c2c" stroke-width=".9" stroke-linejoin="round"/><path d="M16.6,8.4 Q17,14.4 10.4,14.8 L10.4,17 L5.6,13.2 L10.4,9.4 L10.4,11.8 Q13.6,11.6 13.4,8.4 Z" fill="#78a878" stroke="#2c4c2c" stroke-width=".9" stroke-linejoin="round"/></svg>
<svg style="left:111px;top:4px" width="20" height="20" viewBox="0 0 20 20"><path d="M12,12.6 L17.6,18.4" stroke="#222" stroke-width="2.6" stroke-linecap="round"/><circle cx="8" cy="8.4" r="6.2" fill="#f8f8f8" stroke="#2a2a2a" stroke-width="1.3"/><path d="M4.8,8.4 L11.2,8.4 M8,5.2 L8,11.6" stroke="#222" stroke-width="1.5"/></svg>
<svg style="left:137px;top:4px" width="20" height="20" viewBox="0 0 20 20"><path d="M12.4,12.8 L18,18.4" stroke="#222" stroke-width="2.6" stroke-linecap="round"/><circle cx="8.6" cy="8.6" r="6.4" fill="#f8f8f8" stroke="#2a2a2a" stroke-width="1.3"/><path d="M5.4,7.6 L5.4,5.6 L7.4,5.6 M9.8,5.6 L11.8,5.6 L11.8,7.6 M11.8,9.8 L11.8,11.8 L9.8,11.8 M7.4,11.8 L5.4,11.8 L5.4,9.8" stroke="#222" stroke-width="1.3" fill="none"/></svg>
<svg style="left:164px;top:5px" width="18" height="18" viewBox="0 0 18 18"><rect x="1" y="1.2" width="16" height="15.2" rx="1.2" fill="#fafafa" stroke="#3a3a3a" stroke-width="1.2"/><path d="M5,4.6 L15,4.6 M5,7.4 L15,7.4 M5,10.2 L15,10.2 M5,13 L15,13" stroke="#888" stroke-width=".9"/><path d="M2.6,4.6 L3.8,4.6 M2.6,7.4 L3.8,7.4 M2.6,10.2 L3.8,10.2 M2.6,13 L3.8,13" stroke="#222" stroke-width="1.1"/></svg>
<svg style="left:192.5px;top:5.2px" width="18" height="20" viewBox="0 0 18 20"><path d="M3,2.4 L6.6,2.4 L6.6,11 L9,11 L4.8,17 L.8,11 L3,11 Z" fill="#98a890" stroke="#2c342c" stroke-width="1" stroke-linejoin="round"/><text x="13.4" y="7.8" font-family="DejaVu Sans,sans-serif" font-weight="bold" font-size="7" fill="#111" text-anchor="middle">A</text><text x="13.4" y="18.2" font-family="DejaVu Sans,sans-serif" font-weight="bold" font-size="7" fill="#111" text-anchor="middle">Z</text><path d="M13.4,9 L13.4,11.4" stroke="#111" stroke-width="1.2" stroke-dasharray="1 .8"/></svg>
<svg style="left:218px;top:7.6px" width="17.6" height="13.4" viewBox="0 0 21 16"><path d="M.8,8.4 Q10,-1.4 20.2,8.4 Q10,17 .8,8.4 Z" fill="#4a4a4a" stroke="#1a1a1a" stroke-width=".9"/><path d="M3.4,8.4 Q10,2 17.4,8.4 Q10,13.6 3.4,8.4 Z" fill="#a8b0b0"/><circle cx="10.4" cy="8" r="3.7" fill="#1a1a1a"/><circle cx="9.2" cy="6.8" r="1.1" fill="#e8e8e8"/></svg>
<svg style="left:244px;top:5px" width="18" height="18" viewBox="0 0 18 18"><rect x="1" y="1.2" width="16" height="15.2" rx="1.2" fill="#fafafa" stroke="#3a3a3a" stroke-width="1.2"/><rect x="4.4" y="3" width="11" height="3" fill="#7898d0"/><rect x="4.4" y="7.4" width="11" height="3" fill="#7898d0"/><rect x="4.4" y="11.8" width="11" height="3" fill="#7898d0"/><path d="M2.4,4.6 L3.6,4.6 M2.4,9 L3.6,9 M2.4,13.4 L3.6,13.4" stroke="#222" stroke-width="1.1"/></svg>
<svg style="left:269.3px;top:5.2px" width="18.6" height="18.6" viewBox="0 0 20 20"><circle cx="10" cy="10" r="6.4" fill="none" stroke="#f4f0ec" stroke-width="5"/><circle cx="10" cy="10" r="6.4" fill="none" stroke="#d03414" stroke-width="5" stroke-dasharray="5.03 5.03" stroke-dashoffset="-2.51"/><circle cx="10" cy="10" r="9" fill="none" stroke="#3a1c14" stroke-width="1.3"/><circle cx="10" cy="10" r="3.8" fill="none" stroke="#3a1c14" stroke-width="1.1"/><g fill="#3a2a24"><circle cx="3.2" cy="3.2" r="1.3"/><circle cx="16.8" cy="3.2" r="1.3"/><circle cx="3.2" cy="16.8" r="1.3"/><circle cx="16.8" cy="16.8" r="1.3"/></g></svg>
<div class="abs" style="left:293px;top:8.3px;font-size:10px;line-height:12px;color:#111;white-space:nowrap">25 objets (120 caché(s))</div>
</div>
 <div class="cont">
  <svg class="fo" style="left:20.0px;top:13px" viewBox="0 0 30 26"><use href="#fo"/></svg>
  <div class="fl" style="left:34.5px;top:42.5px">Desktop</div>
  <svg class="fo" style="left:90.0px;top:13px" viewBox="0 0 30 26"><use href="#fo"/></svg>
  <div class="fl" style="left:104.5px;top:42.5px">documents</div>
  <svg class="fo" style="left:161.0px;top:13px" viewBox="0 0 30 26"><use href="#fo"/></svg>
  <div class="fl" style="left:175.5px;top:42.5px">drive_c</div>
  <svg class="fo" style="left:231.0px;top:13px" viewBox="0 0 30 26"><use href="#fo"/></svg>
  <div class="fl" style="left:245.5px;top:42.5px">drivers</div>
  <svg class="fo" style="left:301.0px;top:13px" viewBox="0 0 30 26"><use href="#fo"/></svg>
  <div class="fl" style="left:315.5px;top:42.5px">e-anim</div>
  <svg class="fo" style="left:372.0px;top:13px" viewBox="0 0 30 26"><use href="#fo"/></svg>
  <div class="fl" style="left:386.5px;top:42.5px">flash</div>
  <svg class="fo" style="left:442.0px;top:13px" viewBox="0 0 30 26"><use href="#fo"/></svg>
  <svg class="fo" style="left:512.0px;top:13px" viewBox="0 0 30 26"><use href="#fo"/></svg>
  <div class="fl" style="left:526.5px;top:42.5px">FP5AFY~Z</div>
  <svg class="fo" style="left:20.0px;top:82px" viewBox="0 0 30 26"><use href="#fo"/></svg>
  <div class="fl" style="left:34.5px;top:111.5px">iso</div>
  <svg class="fo" style="left:90.0px;top:82px" viewBox="0 0 30 26"><use href="#fo"/></svg>
  <div class="fl" style="left:104.5px;top:111.5px">jeux</div>
  <svg class="fo" style="left:161.0px;top:82px" viewBox="0 0 30 26"><use href="#fo"/></svg>
  <div class="fl" style="left:175.5px;top:111.5px">musique</div>
  <svg class="fo" style="left:231.0px;top:82px" viewBox="0 0 30 26"><use href="#fo"/></svg>
  <div class="fl" style="left:245.5px;top:111.5px;font-weight:bold;letter-spacing:.2px">partage</div>
  <svg class="fo" style="left:301.0px;top:82px" viewBox="0 0 30 26"><use href="#fo"/></svg>
  <div class="fl" style="left:315.5px;top:111.5px">programmes</div>
  <svg class="fo" style="left:372.0px;top:82px" viewBox="0 0 30 26"><use href="#fo"/></svg>
  <div class="fl" style="left:386.5px;top:111.5px">public_html</div>
  <svg class="fo" style="left:442.0px;top:82px" viewBox="0 0 30 26"><use href="#fo"/></svg>
  <div class="fl" style="left:456.5px;top:111.5px">rip</div>
  <svg class="fo" style="left:512.0px;top:82px" viewBox="0 0 30 26"><use href="#fo"/></svg>
  <div class="fl" style="left:526.5px;top:111.5px">scripts</div>
  <svg class="fo" style="left:20.0px;top:151px" viewBox="0 0 30 26"><use href="#fo"/></svg>
  <div class="fl" style="left:34.5px;top:180.5px">test</div>
  <svg class="fo" style="left:90.0px;top:151px" viewBox="0 0 30 26"><use href="#fo"/></svg>
  <div class="fl" style="left:104.5px;top:180.5px">testooo</div>
  <svg class="fo" style="left:161.0px;top:151px" viewBox="0 0 30 26"><use href="#fo"/></svg>
  <div class="fl" style="left:175.5px;top:180.5px">torrents</div>
  <svg class="fo" style="left:231.0px;top:151px" viewBox="0 0 30 26"><use href="#fo"/></svg>
  <div class="fl" style="left:245.5px;top:180.5px">videos</div>
  <svg class="fo" style="left:301.0px;top:151px" viewBox="0 0 30 26"><use href="#fo"/></svg>
  <div class="fl" style="left:315.5px;top:180.5px">z</div>
  <div class="fl l" style="left:424px;top:42px;line-height:13.2px">fond-ecran -<br>images</div>
  <svg style="left:372.5px;top:148px" width="28" height="27" viewBox="0 0 28 27"><rect x=".7" y=".7" width="26.4" height="25.4" fill="#e4e4e4" stroke="#3a3a3a" stroke-width="1.2"/><rect x="2.4" y="2.4" width="23" height="22" fill="#f6f6f6" stroke="#aaa" stroke-width=".5"/><rect x="9" y="4" width="10" height="2.6" fill="#222"/><path d="M4,8.4 L24,8.4 M4,11 L12,11 M4,13.6 L11,13.6 M4,16.2 L12,16.2 M4,19 L24,19 M4,21.6 L20,21.6" stroke="#555" stroke-width="1"/><rect x="14" y="10.4" width="9.6" height="7" fill="#f8e8c8" stroke="#c83020" stroke-width="1"/><path d="M15.6,15.6 L18,12.4 L20,14.4 L22,12" stroke="#c83020" stroke-width=".9" fill="none"/></svg>
  <svg style="left:441.5px;top:141px" width="29" height="34" viewBox="0 0 29 34"><rect x=".7" y=".7" width="27.6" height="32.6" fill="#8e8e8e" stroke="#444" stroke-width="1.3"/><rect x="2.2" y="2.2" width="24.6" height="29.6" fill="#989898"/><text x="14.5" y="10" font-family="DejaVu Sans Mono,monospace" font-weight="bold" font-size="5.6" fill="#1a1a1a" text-anchor="middle">11011</text><text x="14.5" y="16" font-family="DejaVu Sans Mono,monospace" font-weight="bold" font-size="5.6" fill="#1a1a1a" text-anchor="middle">10011</text><text x="14.5" y="22" font-family="DejaVu Sans Mono,monospace" font-weight="bold" font-size="5.6" fill="#1a1a1a" text-anchor="middle">01100</text><text x="14.5" y="28" font-family="DejaVu Sans Mono,monospace" font-weight="bold" font-size="5.6" fill="#1a1a1a" text-anchor="middle">10101</text></svg>
  <svg style="left:514.5px;top:148px" width="24" height="27" viewBox="0 0 24 27"><rect x=".6" y=".6" width="22.8" height="25.8" fill="#f2f2f2" stroke="#3a3a3a" stroke-width="1.1"/><rect x="2" y="2" width="20" height="23" fill="#fafafa" stroke="#bbb" stroke-width=".5"/><path d="M4,5 L20,5 M4,7.4 L20,7.4 M4,9.8 L20,9.8 M4,12.2 L20,12.2 M4,14.6 L20,14.6 M4,17 L20,17 M4,19.4 L20,19.4 M4,21.8 L16,21.8" stroke="#8a8a8a" stroke-width=".9" stroke-dasharray="2.6 .7 1.4 .6"/></svg>
  <div class="fl k" style="left:352px;top:180px;line-height:13.2px">bookmarks.ht<br>ml</div>
  <div class="fl k" style="left:456px;top:180.5px;text-align:center;transform:translateX(-50%)">flash.7z</div>
  <div class="fl k" style="left:493px;top:180px;line-height:13.2px">nautilus-<br>debug-log.txt</div>
  <svg style="left:15px;top:209px" width="36" height="34" viewBox="0 0 36 34"><path d="M18,3 Q23.5,3 27,10 Q31.5,18.5 33,25 Q34,31 26,31.4 L10,31.4 Q2,31 3,25 Q4.5,18.5 9,10 Q12.5,3 18,3 Z" fill="#f6b83c" stroke="#0a0a0a" stroke-width="3.4" stroke-linejoin="round"/><path d="M18,9 Q20.4,9 20.2,12 L19.2,20.6 L16.8,20.6 L15.8,12 Q15.6,9 18,9 Z" fill="#0a0a0a"/><circle cx="18" cy="24.8" r="2.4" fill="#0a0a0a"/><rect x=".6" y=".2" width="10.4" height="10.2" fill="#1a1a1a" stroke="#e8e8e8" stroke-width=".9"/><path d="M3,8.2 L8,3.2 M4.6,2.6 L8.6,2.6 L8.6,6.6" stroke="#fff" stroke-width="1.5" fill="none"/></svg>
  <div class="fl" style="left:34.5px;top:249px;color:#d03848">_ZCHTI~7</div>
  <div class="abs" style="left:586px;top:0;width:13px;height:276px;background:#d2d0d8;border-left:1px solid #bcbac2"></div>
  <div class="abs" style="left:587.4px;top:12px;width:10.8px;height:252px;border-radius:4px;background:linear-gradient(90deg,#9ab0cc,#ffffff 28%,#d4eafc 55%,#9cc6ec 85%,#8aa4c4);border:1.1px solid #8292aa"></div>
  <div class="abs" style="left:587.4px;top:1px;width:10.6px;height:10.6px;border-radius:5px;background:#dedde2"></div>
  <div class="abs" style="left:587.4px;top:264.6px;width:10.6px;height:10.6px;border-radius:5px;background:#dedde2"></div>
  <svg style="left:588.6px;top:3px" width="8" height="7" viewBox="0 0 8 7"><path d="M4,1 L7,5.6 L1,5.6 Z" fill="#a4a2aa"/></svg>
  <svg style="left:588.6px;top:266.4px" width="8" height="7" viewBox="0 0 8 7"><path d="M4,6 L7,1.4 L1,1.4 Z" fill="#a4a2aa"/></svg>
 </div>
</div>
<!-- taskbar -->
<div id="task">
 <div class="b" style="left:1.5px;width:43.5px;padding-left:16px">Menu
  <svg style="left:-0.5px;top:0px" width="16" height="16" viewBox="0 0 16 16"><path d="M2,2.5 Q1,8 3.4,9.6 L3.4,13 Q8,16.4 12.6,13 L12.6,9.6 Q15,8 14,2.5 Q11.5,1 10.4,3.6 L5.6,3.6 Q4.5,1 2,2.5 Z" fill="#7a2c14" stroke="#3a1808" stroke-width=".7"/><path d="M8,3.6 Q6.4,8 5.4,10.4 Q5.4,14.4 8,14.6 Q10.6,14.4 10.6,10.4 Q9.6,8 8,3.6 Z" fill="#fff"/><circle cx="5.4" cy="7" r=".9" fill="#111"/><circle cx="10.6" cy="7" r=".9" fill="#111"/><ellipse cx="8" cy="11" rx="1.5" ry="1.1" fill="#111"/><path d="M7,13.2 Q8,14.2 9,13.2" stroke="#c03030" stroke-width="1" fill="none"/></svg>
 </div>
 <div class="abs" style="left:51.8px;top:2.6px;width:19.4px;height:12.6px;background:#e2e2e2;border:1.2px solid #4c4c4c"></div>
 <div class="abs" style="left:74.5px;top:0;width:26.2px;height:21px;background:#334454"></div>
 <div class="abs" style="left:84.6px;top:3.6px;width:14px;height:10.4px;background:#d4dae0;border:1px solid #eef2f6;border-top:2px solid #f4f6f8"></div>
 <div class="abs" style="left:76.4px;top:8px;width:19.6px;height:10px;background:#8a9cb0;border:1.2px solid #2a3644"></div>
 <div class="b" style="left:103px;width:142px;padding-left:17px;letter-spacing:.3px">[mtPaint 3.19 - /root/mnt/D
  <svg style="left:2px;top:2px" width="13" height="12" viewBox="0 0 13 12"><path d="M1.4,1.4 L11.4,10.6 M11.6,.8 L1.6,11" stroke="#e02020" stroke-width="2" stroke-linecap="round"/><path d="M1.4,1.4 L5.4,5.2" stroke="#e02020" stroke-width="2.8" stroke-linecap="round"/><path d="M.2,11.8 L3,11.8 L.2,9 Z" fill="#111"/></svg></div>
 <div class="b" style="left:247px;width:141px;padding-left:17px">LinNeighborhood
  <svg style="left:2px;top:2px" width="13" height="12" viewBox="0 0 13 12"><path d="M1.4,1.4 L11.4,10.6 M11.6,.8 L1.6,11" stroke="#e02020" stroke-width="2" stroke-linecap="round"/><path d="M1.4,1.4 L5.4,5.2" stroke="#e02020" stroke-width="2.8" stroke-linecap="round"/></svg></div>
 <div class="b" style="left:390px;width:141px;padding-left:17px;letter-spacing:.05px">[Pmount &nbsp; Outil de montage
  <svg style="left:2px;top:1.5px" width="13" height="13" viewBox="0 0 13 13"><rect x="1" y="1" width="11" height="11" fill="#c8c8c8" stroke="#333" stroke-width="1"/><circle cx="6.6" cy="6.6" r="3" fill="#f0f0f0" stroke="#444" stroke-width=".8"/><path d="M2.4,3 L5,3 M8,10.4 L10.6,10.4" stroke="#222" stroke-width="1.1"/><path d="M.2,12.8 L3,12.8 L.2,10 Z" fill="#111"/></svg></div>
 <div class="b" style="left:533px;width:140.5px;padding-left:17.5px;background:#8b9aa9;color:#e4eaf0;border-color:#5a6672;border-bottom-color:#c8d0d8;border-right-color:#c8d0d8;font-size:10.2px">~/mnt/DEBIAN-P4/laurent
  <svg style="left:2.5px;top:3px" width="13" height="10" viewBox="0 0 13 10"><rect x=".5" y=".5" width="12" height="9" fill="#e8ece0" stroke="#4a5a68" stroke-width=".8"/><path d="M1.5,8 L4.4,4 L6.4,6 L8.6,3.4 L11.5,8 Z" fill="#6a9a58"/><circle cx="4" cy="3" r="1.3" fill="#e8c040"/><path d="M7,2 L11.4,2 L11.4,5" stroke="#5888c8" stroke-width="1.2" fill="none"/></svg></div>
 <!-- tray -->
 <div class="abs" style="left:674.5px;top:0;width:46px;height:21px;background:#dadada"></div>
 <svg style="left:679px;top:2.5px" width="19" height="17" viewBox="0 0 19 17"><rect x=".8" y=".8" width="9.6" height="7" fill="#2c3844" stroke="#1a1a1a" stroke-width=".8"/><rect x="2" y="2" width="7.2" height="4.4" fill="#4a5c6c"/><path d="M3.6,8.6 L7.6,8.6 L8.4,10.4 L2.8,10.4 Z" fill="#b8b8a0" stroke="#444" stroke-width=".4"/><rect x="7.6" y="5.6" width="10.4" height="7.4" fill="#2c3844" stroke="#1a1a1a" stroke-width=".8"/><rect x="8.8" y="6.8" width="8" height="4.8" fill="#4a5c6c"/><path d="M10.6,13.6 L15.2,13.6 L16.2,15.8 L9.6,15.8 Z" fill="#2a2a2a"/></svg>
 <svg style="left:701px;top:2.5px" width="17" height="16" viewBox="0 0 17 16"><path d="M1.4,5.4 L4.4,5.4 L8.4,1.6 L8.4,14.4 L4.4,10.6 L1.4,10.6 Z" fill="#c4c4c4" stroke="#5a5a5a" stroke-width="1" stroke-linejoin="round"/><path d="M5,5.6 L5,10.4" stroke="#8a8a8a" stroke-width=".9"/><path d="M10.6,4.6 Q12.6,8 10.6,11.4 M12.8,3.6 Q15.2,8 12.8,12.4" stroke="#9a9ea4" stroke-width="1.2" fill="none"/></svg>
 <div class="abs" style="left:719.8px;top:0;width:27px;height:21px;background:#1658c4"></div>
 <div class="abs" style="left:719.8px;top:4px;width:27px;text-align:center;color:#fff;font-weight:bold;font-size:9.6px;line-height:12px;letter-spacing:.2px">1.9G</div>
 <div class="abs" style="left:746.8px;top:0;width:14px;height:21px;background:#d4d4d4"></div>
 <svg style="left:746.8px;top:0" width="13" height="21" viewBox="0 0 13 21"><path d="M0,21 L0,13 L1.2,5 L2.6,8 L4,12.4 L5.6,16 L7,12 L8,9.6 L9.4,13 L11,16.4 L13,18.4 L13,21 Z" fill="#e81010"/></svg>
</div>

</body></html>
